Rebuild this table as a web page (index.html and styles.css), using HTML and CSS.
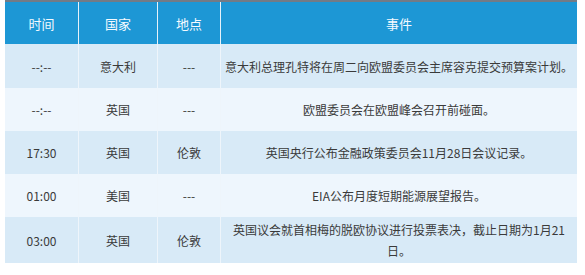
FILE: index.html
```html
<!DOCTYPE html>
<html lang="zh">
<head>
<meta charset="utf-8">
<link rel="stylesheet" href="styles.css">
</head>
<body>
<table class="cal">
  <colgroup>
    <col class="c-time">
    <col class="c-country">
    <col class="c-place">
    <col class="c-event">
  </colgroup>
  <thead>
    <tr class="head">
      <th>时间</th>
      <th>国家</th>
      <th>地点</th>
      <th>事件</th>
    </tr>
  </thead>
  <tbody>
    <tr class="odd r1">
      <td>--:--</td>
      <td>意大利</td>
      <td>---</td>
      <td>意大利总理孔特将在周二向欧盟委员会主席容克提交预算案计划。</td>
    </tr>
    <tr class="even">
      <td>--:--</td>
      <td>英国</td>
      <td>---</td>
      <td>欧盟委员会在欧盟峰会召开前碰面。</td>
    </tr>
    <tr class="odd">
      <td>17:30</td>
      <td>英国</td>
      <td>伦敦</td>
      <td>英国央行公布金融政策委员会11月28日会议记录。</td>
    </tr>
    <tr class="even">
      <td>01:00</td>
      <td>美国</td>
      <td>---</td>
      <td>EIA公布月度短期能源展望报告。</td>
    </tr>
    <tr class="odd">
      <td>03:00</td>
      <td>英国</td>
      <td>伦敦</td>
      <td>英国议会就首相梅的脱欧协议进行投票表决，截止日期为1月21日。</td>
    </tr>
  </tbody>
</table>
</body>
</html>
```

FILE: styles.css
```css
html, body {
  margin: 0;
  padding: 0;
  background: #ffffff;
}

body {
  font-family: "Noto Sans CJK SC", "Noto Sans", sans-serif;
  color: #3a3a3a;
}

.cal {
  margin-left: 5px;
  width: 572px;
  table-layout: fixed;
  border-collapse: separate;
  border-spacing: 0;
  border-top: 2px solid #737b86;
}

.c-time { width: 73px; }
.c-country { width: 79px; }
.c-place { width: 63px; }
.c-event { width: 357px; }

.cal th,
.cal td {
  box-sizing: border-box;
  text-align: center;
  vertical-align: middle;
  padding: 2px 4px;
  font-size: 12px;
  line-height: 21px;
  font-weight: normal;
}

.cal th + th,
.cal td + td {
  border-left: 1px solid #eef5fb;
}

.head th {
  height: 42px;
  background: #1d97d5;
  color: #f4faff;
  font-size: 13px;
}

.head th + th {
  border-left: 1px solid #e6f2fa;
}

.cal tbody td {
  height: 43px;
}

.cal tbody tr.r1 td {
  height: 44px;
}

.odd td {
  background: #d8eaf7;
}

.even td {
  background: #eef6fd;
}
```
